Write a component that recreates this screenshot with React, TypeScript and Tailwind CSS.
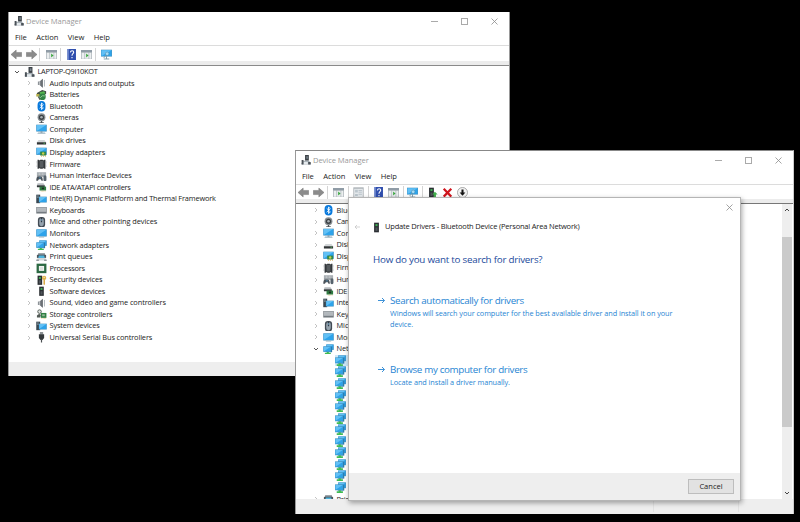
import type { ReactNode } from 'react'

function Svg({ children, className = 'w-[11px] h-[11px]' }: { children: ReactNode; className?: string }) {
  return (
    <svg viewBox="0 0 16 16" className={`shrink-0 ${className}`}>
      {children}
    </svg>
  )
}

function Screen({ x = 0, y = 2, w = 16, h = 10 }: { x?: number; y?: number; w?: number; h?: number }) {
  return (
    <g>
      <rect x={x} y={y} width={w} height={h} fill="#4d94bd" />
      <rect x={x + 0.7} y={y + 0.7} width={w - 1.4} height={h - 1.4} fill="#2ea3ea" />
      <path d={`M${x + 0.7} ${y + h - 0.7}V${y + 0.7}H${x + w - 0.7}Z`} fill="#62c0f5" />
    </g>
  )
}

function Chip({ x = 0 }: { x?: number }) {
  return (
    <g>
      <rect x={x} y="1" width="7" height="14" fill="#2b2f33" />
      <rect x={x + 2} y="3" width="3" height="3" fill="#3fae54" />
      <rect x={x + 2} y="8" width="3" height="5" fill="#50565b" />
    </g>
  )
}

function Speaker() {
  return (
    <g>
      <path d="M2.500 5.500H5L10 1v14L5 10.500H2.500Z" fill="#8d9297" />
      <path d="M6.500 4.500 10 1v14l-3.500-3.500Z" fill="#6b7075" />
      <path d="M5 5.500v5" stroke="#d7dadc" />
      <path d="M12.500 3v10" stroke="#9fa7ad" strokeWidth="1.200" />
    </g>
  )
}

const icons: Record<string, ReactNode> = {
  root: (
    <g>
      <path d="M6.500 0h6v9h-6z" fill="#3b4146" />
      <path d="M8.500 2h2.500v4H8.500z" fill="#79848c" />
      <path d="M1 13 4 9h9l2.500 4v2H1Z" fill="#a3acb3" />
      <path d="M4 11h7v4H4z" fill="#e4e9ec" />
      <path d="M1 8h3v7H1zM11.500 11h4v4h-4z" fill="#4a5157" />
    </g>
  ),
  audio: <Speaker />,
  sound: <Speaker />,
  battery: (
    <g>
      <path d="M1 4.500 9 0l6 2v4l-8 3-6-2Z" fill="#3e4a41" />
      <path d="M5 3.500 12 2l2 3-7 3Z" fill="#53b64f" />
      <path d="M0 6h5v4H0z" fill="#b7b04c" />
      <circle cx="9.500" cy="10.500" r="5" fill="#308543" />
      <path d="M6 12q3-5 7-3" stroke="#9ed39c" fill="none" strokeWidth="1.300" />
      <path d="M3 10l3 5" stroke="#4d554e" strokeWidth="1.800" />
    </g>
  ),
  bluetooth: (
    <g>
      <rect x="2" y="0" width="12" height="16" rx="6" fill="#0879dc" />
      <path d="m5.200 5 5.600 5.500L8 13V3l2.800 2.500L5.200 11" fill="none" stroke="#fff" strokeWidth="1.300" />
    </g>
  ),
  camera: (
    <g>
      <circle cx="8" cy="6.500" r="6" fill="#888e92" />
      <circle cx="8" cy="6.500" r="4" fill="#3a3f43" />
      <circle cx="8" cy="6.500" r="1.900" fill="#a9b0b4" />
      <path d="M7 12h2v2h2.500v1.500h-7V14H7Z" fill="#50565a" />
    </g>
  ),
  computer: (
    <g>
      <Screen x={0} y={1} h={10.5} />
      <path d="M3 13h10l1.500 2h-13Z" fill="#9ab2bf" />
      <path d="M6.500 11.500h3V13h-3z" fill="#6e838f" />
    </g>
  ),
  monitor: (
    <g>
      <Screen x={0} y={2} h={11} />
      <path d="M4 14h8" stroke="#8ea6b2" />
    </g>
  ),
  disk: (
    <g>
      <path d="M3.500 6h9L15 9.500H1Z" fill="#d2d6d8" />
      <path d="M1 9.500h14V13H1z" fill="#303436" />
      <path d="M11 11h2.500" stroke="#51c45c" strokeWidth="1.200" />
    </g>
  ),
  display: (
    <g>
      <Screen x={0} y={1} h={11} />
      <path d="M6 7h9v6H6z" fill="#318747" />
      <circle cx="10.500" cy="10" r="1.900" fill="#c9d04c" />
      <path d="M8 13v2M11 13v2M14 13v2" stroke="#d2a23d" />
    </g>
  ),
  firmware: (
    <g>
      <path d="M2 1h2v1h2V1h4v1h2V1h2v14h-2v-1h-2v1H6v-1H4v1H2Z" fill="#34383b" />
      <path d="M5 3h6v10H5z" fill="#565b5f" />
      <path d="M1 3v10M15 3v10" stroke="#8b9195" strokeDasharray="1 1" />
    </g>
  ),
  human: (
    <g>
      <path d="M1 2h14v7H1z" fill="#9aa1a6" />
      <path d="M2 3.500h12M2 5.500h12" stroke="#dde1e4" strokeDasharray="1.500 .7" />
      <path d="M0 15q0-7 3.500-6.500h3Q10 8.500 10 15H8l-1-2.500H4L2.500 15Z" fill="#4a5259" />
      <rect x="11" y="7" width="4.500" height="8.500" rx="2" fill="#56626c" />
      <path d="M4 10.500h3" stroke="#4ba1d2" />
    </g>
  ),
  ide: (
    <g>
      <path d="M2 2h9l2 3H1Z" fill="#b8bdc0" />
      <path d="M1 5h12v3H1z" fill="#303538" />
      <path d="M5 7h10v6H5z" fill="#2f7a41" />
      <path d="M8.500 8.500H12V11H8.500z" fill="#1d2b21" />
      <path d="M7 14h7" stroke="#cda94c" strokeDasharray="1 1" />
    </g>
  ),
  system: (
    <g>
      <path d="M0 1h6v13H0z" fill="#3a4852" />
      <path d="M1 3h3M1 5h3" stroke="#9cacb6" />
      <Screen x={4} y={4} w={12} h={9} />
    </g>
  ),
  keyboard: (
    <g>
      <path d="M0 3h16v10H0z" fill="#747b80" />
      <path d="M.700 3.700h14.600v6.600H.700z" fill="#b9bec2" />
      <path d="M1 6h14M1 8h14" stroke="#a2a9ae" strokeDasharray="1.500 .5" strokeWidth=".7" />
    </g>
  ),
  mouse: (
    <g>
      <rect x="2.500" y="0" width="11" height="16" rx="4.500" fill="#424b54" />
      <rect x="4.500" y="2" width="7" height="12" rx="3.200" fill="#95a3ae" />
      <path d="M8 1v7" stroke="#303841" strokeWidth="1.800" />
      <path d="M8 3v3" stroke="#7cc2ef" strokeWidth=".8" />
    </g>
  ),
  network: (
    <g>
      <Screen x={4.5} y={0.5} w={11.5} h={8.5} />
      <path d="M4 4h9.500v8.500H4z" fill="#2877a8" />
      <Screen x={0} y={3.5} w={12} h={8.5} />
      <path d="M5.500 12h3v1.500h3V16h-9v-2.500h3Z" fill="#3fbb53" />
    </g>
  ),
  printer: (
    <g>
      <path d="M3 2h10l1 3H2Z" fill="#7d878e" />
      <path d="M1 4.500h14V9H1z" fill="#4c555b" />
      <path d="M4 5.500h8l1 3.500H3Z" fill="#4db4dd" />
      <path d="M2 9h12l1.500 4H.500Z" fill="#d2d7da" />
      <path d="M0 12.500h4M12 12.500h4" stroke="#646d73" strokeWidth="1.400" />
    </g>
  ),
  cpu: (
    <g>
      <path d="M.500 1h15v14.500H.500z" fill="#2c6943" />
      <path d="M4 4.500h8v7.500H4z" fill="#f2f4f1" />
      <path d="M5.500 6h5v4.500h-5z" fill="#dce0dd" />
    </g>
  ),
  security: (
    <g>
      <Chip x={2} />
      <circle cx="12" cy="4.500" r="3.300" fill="#dfb44f" />
      <circle cx="12" cy="3.500" r="1" fill="#fff3cd" />
      <path d="M11 7h2.300v7L12 15.500 11 14Z" fill="#d8a842" />
    </g>
  ),
  chip: <Chip x={4.5} />,
  storage: (
    <g>
      <circle cx="5" cy="4" r="2.700" fill="#e5e8e5" stroke="#4f5852" strokeWidth="1.400" />
      <path d="M7 6h8.500v7.500H7z" fill="#318044" />
      <path d="M9 8h4v3H9z" fill="#92b894" />
      <path d="M1 10q3-4 6-1l-1 4H1Z" fill="#525a55" />
      <path d="M8 14.500h7" stroke="#d5b64c" strokeDasharray="1 1" />
    </g>
  ),
  usb: (
    <g>
      <path d="M5.500 0h5v4h-5z" fill="#8e9497" />
      <path d="M4 3.500h8V9l-2.500 3h-3L4 9Z" fill="#353a3d" />
      <path d="M8 11v5" stroke="#4c5154" strokeWidth="1.800" />
    </g>
  ),
}

const panel = (
  <g>
    <path d="M0 1.500h16v13H0z" fill="#a9b1b7" />
    <path d="M0 1.500h16v3H0z" fill="#8f9ba6" />
    <path d="M1 5.500h4V14H1zM6 5.500h5V14H6zM12 5.500h3V14h-3z" fill="#eceff0" />
  </g>
)

const tools: Record<string, ReactNode> = {
  back: <path d="M0 8 7.500 1.500V5H15.500v6h-8v3.500Z" fill="#8b8b8b" stroke="#747474" strokeWidth=".7" />,
  forward: <path d="M16 8 8.500 1.500V5H.500v6h8v3.500Z" fill="#8b8b8b" stroke="#747474" strokeWidth=".7" />,
  tree: (
    <g>
      {panel}
      <path d="M7.500 6.500v6L11 9.500Z" fill="#35a33a" />
    </g>
  ),
  properties: (
    <g>
      <path d="M.5.500h15v15H.5z" fill="#aab0b5" />
      <path d="M1.700 2.500h12.600v12H1.700z" fill="#e6eaed" />
      <path d="M3 4h4v4H3zM3 10h4v3H3z" fill="#bbc6cd" />
      <path d="M8 5h5M8 7.500h5M8 10.500h5" stroke="#a3afb7" />
    </g>
  ),
  help: (
    <g>
      <path d="M2 0h12.500v16H2z" fill="#304fae" />
      <path d="M2 0h2v16H2z" fill="#7890d1" />
      <path d="M6.400 5q.3-2.500 2.500-2.500Q11.200 2.500 11.200 4.700q0 1.300-1.400 2.300Q8.700 8 8.700 9.700M8.700 11.500v1.900" fill="none" stroke="#fff" strokeWidth="1.600" />
    </g>
  ),
  scan: (
    <g>
      <Screen x={0} y={1} h={10} />
      <circle cx="9" cy="7" r="2.600" fill="#a5dbf4" stroke="#4d8caf" strokeWidth=".8" />
      <path d="m7 9-3 4M4 14.500h8M8 10.500v4" stroke="#7896a5" strokeWidth="1.300" />
    </g>
  ),
  update: (
    <g>
      <Chip x={3} />
      <path d="m11.500 7 4 4h-2.500v4.500h-3V11H7.500Z" fill="#41af4c" />
    </g>
  ),
  remove: <path d="m2.500 2.500 11 11.500M13.500 2.500l-11 11.500" stroke="#cf151d" strokeWidth="3.200" />,
  disable: (
    <g>
      <circle cx="8" cy="8" r="7.300" fill="#f3f3f3" stroke="#8a8a8a" />
      <path d="M6.500 3.500h3V8H12.200L8 12.700 3.800 8h2.700Z" fill="#151515" />
    </g>
  ),
}

const categories: [string, string, string][] = [
  ['audio', 'Audio inputs and outputs', 'tracking-[-0.1px]'],
  ['battery', 'Batteries', 'tracking-[-0.15px]'],
  ['bluetooth', 'Bluetooth', 'tracking-[-0.09px]'],
  ['camera', 'Cameras', 'tracking-[-0.2px]'],
  ['computer', 'Computer', 'tracking-[-0.1px]'],
  ['disk', 'Disk drives', 'tracking-[-0.1px]'],
  ['display', 'Display adapters', 'tracking-[-0.12px]'],
  ['firmware', 'Firmware', 'tracking-[-0.2px]'],
  ['human', 'Human Interface Devices', 'tracking-[-0.18px]'],
  ['ide', 'IDE ATA/ATAPI controllers', 'tracking-[-0.3px]'],
  ['system', 'Intel(R) Dynamic Platform and Thermal Framework', 'tracking-[-0.17px]'],
  ['keyboard', 'Keyboards', 'tracking-[-0.15px]'],
  ['mouse', 'Mice and other pointing devices', 'tracking-[-0.06px]'],
  ['monitor', 'Monitors', 'tracking-[-0.1px]'],
  ['network', 'Network adapters', 'tracking-[-0.16px]'],
  ['printer', 'Print queues', 'tracking-[-0.08px]'],
  ['cpu', 'Processors', 'tracking-[-0.24px]'],
  ['security', 'Security devices', 'tracking-[-0.12px]'],
  ['chip', 'Software devices', 'tracking-[-0.14px]'],
  ['sound', 'Sound, video and game controllers', 'tracking-[-0.1px]'],
  ['storage', 'Storage controllers', 'tracking-[-0.13px]'],
  ['system', 'System devices', 'tracking-[-0.16px]'],
  ['usb', 'Universal Serial Bus controllers', 'tracking-[-0.13px]'],
]

function Chevron({ open = false }: { open?: boolean }) {
  return (
    <svg viewBox="0 0 6 6" className="h-[6px] w-[6px] shrink-0" fill="none">
      {open ? <path d="m1 2 2 2 2-2" stroke="#555" /> : <path d="m2 1 2 2-2 2" stroke="#b4b4b4" strokeWidth=".8" />}
    </svg>
  )
}

function TreeRow({ icon, label, open, track = '' }: { icon: string; label: string; open?: boolean; track?: string }) {
  return (
    <div className="flex h-[11.57px] items-center whitespace-nowrap">
      <Chevron open={open} />
      <Svg className="ml-1 h-[10.5px] w-[11px]">{icons[icon]}</Svg>
      <span className={`ml-[2.5px] ${track}`}>{label}</span>
    </div>
  )
}

function CloseIcon() {
  return (
    <svg viewBox="0 0 7 7" className="h-[7px] w-[7px]">
      <path d="m.5.5 6 6M6.500.5l-6 6" stroke="#8c8c8c" strokeWidth=".8" />
    </svg>
  )
}

function TitleBar() {
  return (
    <div className="flex h-[18px] shrink-0 items-center pl-[5px] text-[7.6px] text-[#999]">
      <Svg className="h-[10px] w-[10px]">{icons.root}</Svg>
      <span className="ml-[2px] mt-px tracking-[-0.08px]">Device Manager</span>
      <div className="ml-auto flex items-center gap-[23px] pr-[11px]">
        <div className="h-px w-[7px] bg-[#aaa]" />
        <div className="h-[7px] w-[7px] border border-[#aaa]" />
        <CloseIcon />
      </div>
    </div>
  )
}

function MenuBar() {
  return (
    <div className="flex h-[16px] shrink-0 items-center gap-[9.5px] border-b border-[#dcdcdc] pl-[6px] pt-px text-[7.6px] tracking-[-0.05px] text-[#222]">
      <span>File</span>
      <span>Action</span>
      <span>View</span>
      <span>Help</span>
    </div>
  )
}

function Separator({ className }: { className: string }) {
  return <div className={`h-[13px] w-px bg-[#d4d4d4] ${className}`} />
}

function Tool({ name }: { name: string }) {
  return <Svg className="h-[11px] w-[11px]">{tools[name]}</Svg>
}

function FirstWindow() {
  return (
    <section className="absolute left-[8px] top-[12px] flex h-[364px] w-[502px] flex-col border-l border-r border-[#999] bg-white">
      <TitleBar />
      <MenuBar />
      <div className="flex h-[14px] shrink-0 items-center pl-[2px] pt-[2px]">
        <Tool name="back" />
        <div className="w-[4px]" />
        <Tool name="forward" />
        <Separator className="ml-[2px] mr-[6px]" />
        <Tool name="tree" />
        <Separator className="ml-[3px] mr-[5px]" />
        <Tool name="help" />
        <div className="w-[4px]" />
        <Tool name="tree" />
        <Separator className="ml-[3px] mr-[5px]" />
        <Tool name="scan" />
      </div>
      <div className="mt-px h-[5px] shrink-0 border-b border-[#8a8a8a] bg-[#ececec]" />
      <div className="grow pl-[5px]">
        <TreeRow icon="root" label="LAPTOP-Q9I10KOT" open track="tracking-[-0.3px]" />
        <div className="pl-[12px]">
          {categories.map(([icon, label, track]) => (
            <TreeRow key={label} icon={icon} label={label} track={track} />
          ))}
        </div>
      </div>
      <div className="h-[14px] shrink-0 bg-[#eee]" />
    </section>
  )
}

function Choice({ title, className, children }: { title: string; className: string; children: ReactNode }) {
  return (
    <div className={`flex whitespace-nowrap pl-[29px] text-[#2785d3] ${className}`}>
      <svg viewBox="0 0 7 7" className="mt-[4px] h-[7px] w-[7px]" fill="none">
        <path d="M0 3.500h6.300M4 1l2.500 2.500L4 6" stroke="#2785d3" strokeWidth=".9" />
      </svg>
      <div className="ml-[5px]">
        <p className="text-[9.8px] leading-[15px] tracking-[-0.34px]">{title}</p>
        <p className="text-[7.3px] leading-[10.5px] tracking-[-0.06px]">{children}</p>
      </div>
    </div>
  )
}

function UpdateDialog() {
  return (
    <div className="absolute left-[52px] top-[46px] flex h-[304px] w-[393px] flex-col border border-[#b5b5b5] bg-white shadow-[1px_2px_5px_rgba(0,0,0,0.35)]">
      <div className="flex h-[18px] items-center justify-end pr-[7px]">
        <CloseIcon />
      </div>
      <div className="flex h-[22px] items-center pl-[5px] text-[7.5px] text-[#222]">
        <svg viewBox="0 0 6 6" className="h-[6px] w-[6px]" fill="none">
          <path d="M6 3H1M3 1 1 3l2 2" stroke="#c2c2c2" strokeWidth=".7" />
        </svg>
        <Svg className="ml-[11px] h-[11px] w-[11px]">{icons.chip}</Svg>
        <span className="ml-[3px] tracking-[-0.19px]">Update Drivers - Bluetooth Device (Personal Area Network)</span>
      </div>
      <h1 className="mt-[14px] pl-[24px] text-[9.8px] leading-[16px] tracking-[-0.24px] text-[#1b4a9c]">How do you want to search for drivers?</h1>
      <Choice title="Search automatically for drivers" className="mt-[25px]">
        Windows will search your computer for the best available driver and install it on your
        <br />
        device.
      </Choice>
      <Choice title="Browse my computer for drivers" className="mt-[33px]">
        Locate and install a driver manually.
      </Choice>
      <div className="mt-auto flex h-[27px] shrink-0 items-center justify-end bg-[#eee] pr-[6px]">
        <button className="h-[15px] w-[46px] border border-[#bdbdbd] bg-[#e2e2e2] text-[7.5px] leading-none text-[#222]">Cancel</button>
      </div>
    </div>
  )
}

function SecondWindow() {
  return (
    <section className="absolute left-[295px] top-[150px] flex h-[364px] w-[499px] flex-col border-l border-r border-t border-l-[#999] border-r-[#ccc] border-t-[#888] bg-white">
      <TitleBar />
      <MenuBar />
      <div className="flex h-[14px] shrink-0 items-center pl-[2px]">
        <Tool name="back" />
        <div className="w-[4px]" />
        <Tool name="forward" />
        <Separator className="ml-[3px] mr-[5px]" />
        <Tool name="tree" />
        <Separator className="ml-[4px] mr-[3.5px]" />
        <Tool name="properties" />
        <Separator className="mx-[4px]" />
        <Tool name="help" />
        <div className="w-[4px]" />
        <Tool name="tree" />
        <Separator className="ml-[4px] mr-[3.5px]" />
        <Tool name="scan" />
        <Separator className="mx-[4px]" />
        <Tool name="update" />
        <div className="w-[3.5px]" />
        <Tool name="remove" />
        <div className="w-[4px]" />
        <Tool name="disable" />
      </div>
      <div className="h-[5px] shrink-0 border-b border-[#777] bg-[#ececec]" />
      <div className="flex h-[295px] shrink-0">
        <div className="grow overflow-hidden pl-[17px] pt-[0.5px]">
          {categories.slice(2, 15).map(([icon, label, track]) => (
            <TreeRow key={label} icon={icon} label={label} track={track} open={icon === 'network'} />
          ))}
          {Array.from({ length: 12 }, (_, i) => (
            <div key={i} className="flex h-[11.57px] items-center pl-[22px]">
              <div className={`h-[11.57px] w-[13px] ${i === 0 ? 'bg-[#cfe8f8]' : ''}`}>
                <Svg className="h-[11px] w-[11px]">{icons.network}</Svg>
              </div>
            </div>
          ))}
          <TreeRow icon="printer" label="Print queues" track="tracking-[-0.08px]" />
        </div>
        <div className="mr-px flex w-[10px] flex-col items-center bg-[#eee]">
          <svg viewBox="0 0 6 6" className="mt-[3px] h-[6px] w-[6px]" fill="none">
            <path d="m1 4 2-2 2 2" stroke="#444" />
          </svg>
          <div className="mt-[24px] h-[190px] w-full bg-[#cacaca]" />
          <svg viewBox="0 0 6 6" className="mb-[3px] mt-auto h-[6px] w-[6px]" fill="none">
            <path d="m1 2 2 2 2-2" stroke="#444" />
          </svg>
        </div>
      </div>
      <div className="flex grow justify-end bg-[#eee]">
        <div className="my-[2px] w-[86px] border-l border-r border-[#e2e2e2]" />
        <div className="w-[54px]" />
      </div>
      <UpdateDialog />
    </section>
  )
}

export default function App() {
  return (
    <main className="relative h-[522px] w-[800px] overflow-hidden bg-black font-['Open_Sans','Noto_Sans',sans-serif] text-[7.4px] leading-none text-[#222]">
      <FirstWindow />
      <SecondWindow />
    </main>
  )
}
